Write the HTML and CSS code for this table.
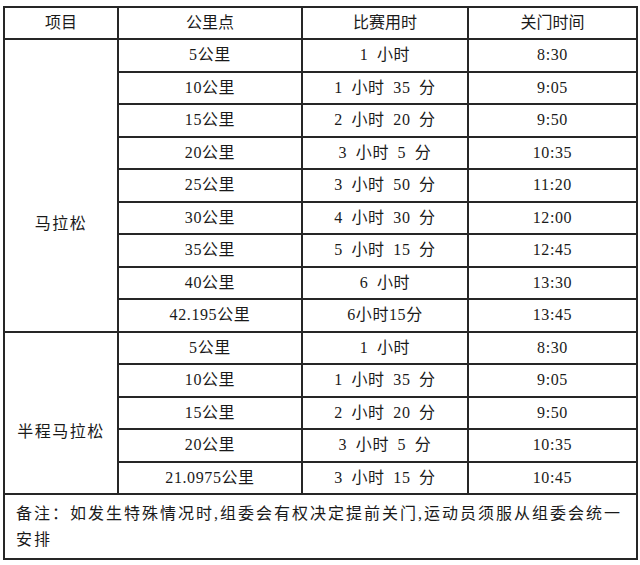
FILE: index.html
```html
<!DOCTYPE html>
<html lang="zh-CN">
<head>
<meta charset="utf-8">
<title>关门时间</title>
<link rel="stylesheet" href="styles.css">
</head>
<body>
<table class="sched">
  <colgroup>
    <col class="c1"><col class="c2"><col class="c3"><col class="c4">
  </colgroup>
  <thead>
    <tr class="head"><th>项目</th><th>公里点</th><th>比赛用时</th><th>关门时间</th></tr>
  </thead>
  <tbody>
    <tr><td rowspan="9" class="group full"><span>马拉松</span></td><td>5公里</td><td>1 小时</td><td>8:30</td></tr>
    <tr><td>10公里</td><td>1 小时 35 分</td><td>9:05</td></tr>
    <tr><td>15公里</td><td>2 小时 20 分</td><td>9:50</td></tr>
    <tr><td>20公里</td><td>3 小时 5 分</td><td>10:35</td></tr>
    <tr><td>25公里</td><td>3 小时 50 分</td><td>11:20</td></tr>
    <tr><td>30公里</td><td>4 小时 30 分</td><td>12:00</td></tr>
    <tr><td>35公里</td><td>5 小时 15 分</td><td>12:45</td></tr>
    <tr><td>40公里</td><td>6 小时</td><td>13:30</td></tr>
    <tr><td>42.195公里</td><td>6小时15分</td><td>13:45</td></tr>
    <tr><td rowspan="5" class="group half"><span>半程马拉松</span></td><td>5公里</td><td>1 小时</td><td>8:30</td></tr>
    <tr><td>10公里</td><td>1 小时 35 分</td><td>9:05</td></tr>
    <tr><td>15公里</td><td>2 小时 20 分</td><td>9:50</td></tr>
    <tr><td>20公里</td><td>3 小时 5 分</td><td>10:35</td></tr>
    <tr><td>21.0975公里</td><td>3 小时 15 分</td><td>10:45</td></tr>
    <tr class="note"><td colspan="4">备注：如发生特殊情况时,组委会有权决定提前关门,运动员须服从组委会统一安排</td></tr>
  </tbody>
</table>
</body>
</html>
```
FILE: styles.css
```css
html, body {
  margin: 0;
  padding: 0;
  background: #ffffff;
}
body {
  padding: 6px 0 0 3px;
  font-family: "Liberation Serif", "Noto Sans CJK SC", serif;
  font-size: 16px;
  color: #1a1a1a;
}
.sched {
  border-collapse: collapse;
  table-layout: fixed;
  width: 633px;
}
.c1 { width: 114px; }
.c2 { width: 184px; }
.c3 { width: 166px; }
.c4 { width: 169px; }
.sched th,
.sched td {
  border: 2px solid #262626;
  padding: 0;
  text-align: center;
  vertical-align: middle;
  font-weight: normal;
  line-height: 20px;
}
.head th { height: 30px; }
.sched tbody tr { height: 32.5px; }
.sched tbody td {
  letter-spacing: 0.6px;
  word-spacing: 4px;
}
.group { vertical-align: top !important; }
.group span { display: block; letter-spacing: 1.5px; }
.full span { padding-top: 174px; }
.half span { padding-top: 89px; }
.sched tr.note { height: 65px; }
.sched .note td {
  text-align: left;
  vertical-align: top;
  padding: 6px 5px 0 11px;
  letter-spacing: 2px;
  word-spacing: 0;
  line-height: 26px;
}
```
